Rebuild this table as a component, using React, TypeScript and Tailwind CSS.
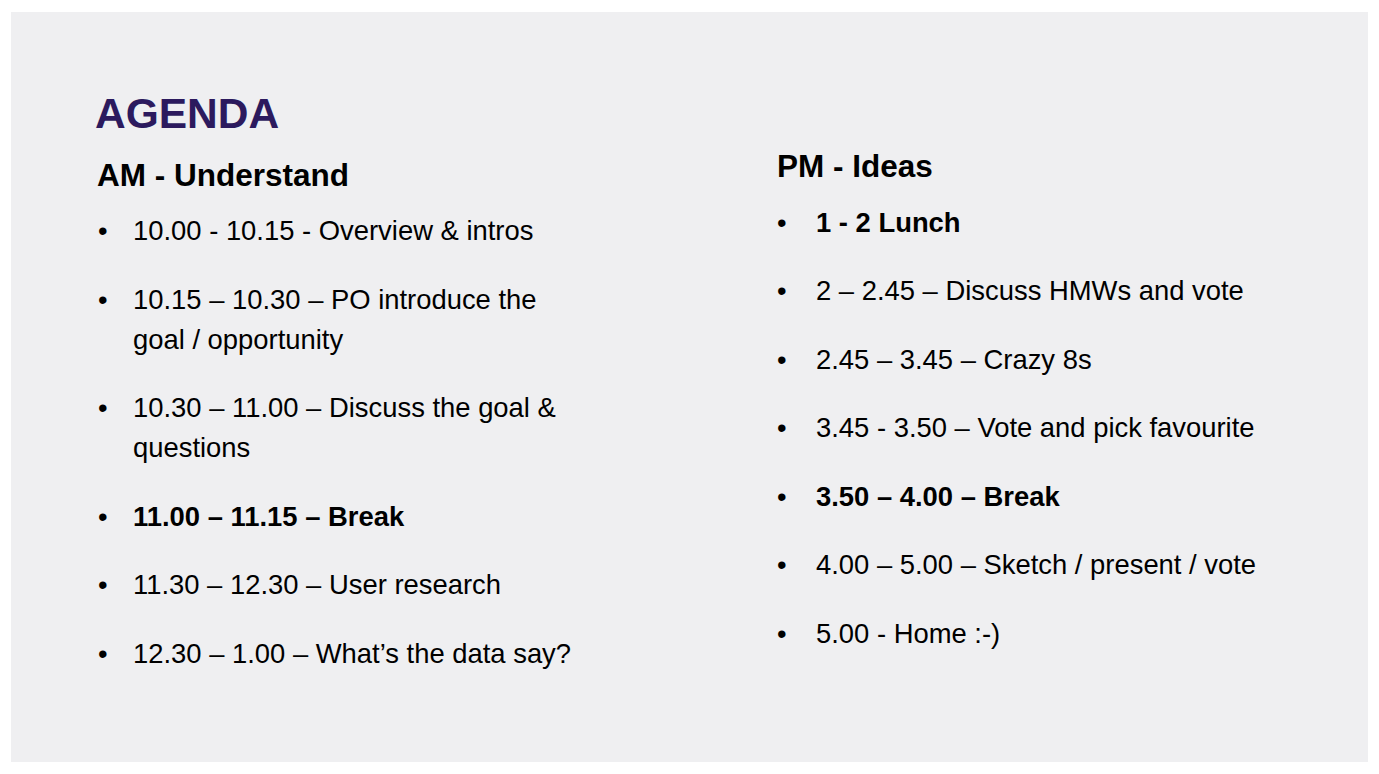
import React from "react";

type Item = { text: string; bold?: boolean };

const morning: Item[] = [
  { text: "10.00 - 10.15 - Overview & intros" },
  { text: "10.15 – 10.30 – PO introduce the goal / opportunity" },
  { text: "10.30 – 11.00 – Discuss the goal & questions" },
  { text: "11.00 – 11.15 – Break", bold: true },
  { text: "11.30 – 12.30 – User research" },
  { text: "12.30 – 1.00 – What’s the data say?" },
];

const afternoon: Item[] = [
  { text: "1 - 2 Lunch", bold: true },
  { text: "2 – 2.45 – Discuss HMWs and vote" },
  { text: "2.45 – 3.45 – Crazy 8s" },
  { text: "3.45 - 3.50 – Vote and pick favourite" },
  { text: "3.50 – 4.00 – Break", bold: true },
  { text: "4.00 – 5.00 – Sketch / present / vote" },
  { text: "5.00 - Home :-)" },
];

function AgendaList({ items, gap, bullet }: { items: Item[]; gap: string; bullet: string }) {
  return (
    <ul className={`mt-[20px] flex flex-col ${gap}`}>
      {items.map((item) => (
        <li key={item.text} className="flex text-[27.4px] leading-[40px] text-black">
          <span className={`${bullet} shrink-0`}>•</span>
          <span className={item.bold ? "font-bold" : ""}>{item.text}</span>
        </li>
      ))}
    </ul>
  );
}

export default function App() {
  return (
    <div className="min-h-screen bg-white p-[11px] pt-[12px] font-['Liberation_Sans',Arial,sans-serif]">
      <div className="flex h-[750px] w-[1357px] items-start bg-[#efeff1] pl-[84px] pt-[81px]">
        <section className="w-[488px]">
          <h1 className="text-[42.5px] font-bold leading-none text-[#2c1a5e]">AGENDA</h1>
          <h2 className="mt-[24px] pl-[2px] text-[31.5px] font-bold leading-none text-black">
            AM - Understand
          </h2>
          <AgendaList items={morning} gap="gap-[28.6px]" bullet="w-[38px] pl-[3px]" />
        </section>
        <section className="ml-[194px] mt-[58px]">
          <h2 className="text-[31.5px] font-bold leading-none text-black">PM - Ideas</h2>
          <AgendaList items={afternoon} gap="gap-[28.5px]" bullet="w-[39px]" />
        </section>
      </div>
    </div>
  );
}
